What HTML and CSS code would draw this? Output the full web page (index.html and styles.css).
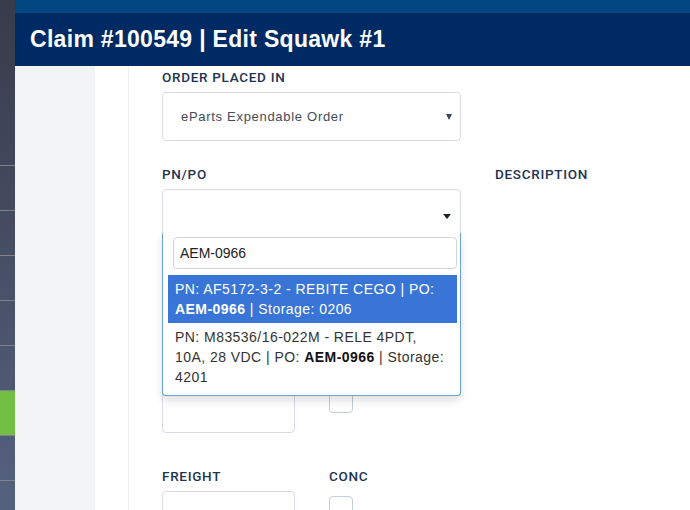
FILE: index.html
```html
<!DOCTYPE html>
<html>
<head>
<meta charset="utf-8">
<link rel="stylesheet" href="styles.css">
</head>
<body>
<div class="app">
  <nav class="sidebar">
    <div class="side-top"></div>
    <div class="side-item"></div>
    <div class="side-item"></div>
    <div class="side-item"></div>
    <div class="side-item"></div>
    <div class="side-item"></div>
    <div class="side-item active"></div>
    <div class="side-item"></div>
    <div class="side-item"></div>
  </nav>
  <div class="main">
    <div class="topbar"></div>
    <header class="header"><h1>Claim #100549 | Edit Squawk #1</h1></header>
    <div class="body">
      <div class="gutter"></div>
      <div class="panel">
        <div class="inner">
          <div class="field">
            <label class="label">Order Placed In</label>
            <div class="select">
              <span class="select-text">eParts Expendable Order</span>
              <span class="caret-sm"></span>
            </div>
          </div>

          <div class="row row-pn">
            <div class="field wide">
              <label class="label">PN/PO</label>
              <div class="select">
                <span class="caret"></span>
                <div class="dropdown">
                  <div class="search">AEM-0966</div>
                  <ul class="results">
                    <li class="option highlighted">PN: AF5172-3-2 - REBITE CEGO | PO: <b>AEM-0966</b> | Storage: 0206</li>
                    <li class="option">PN: M83536/16-022M - RELE 4PDT, 10A, 28 VDC | PO: <b>AEM-0966</b> | Storage: 4201</li>
                  </ul>
                </div>
              </div>
            </div>
            <div class="field">
              <label class="label">Description</label>
            </div>
          </div>

          <div class="row row-hidden">
            <div class="field small">
              <div class="label-space"></div>
              <div class="input"></div>
            </div>
            <div class="field">
              <div class="label-space"></div>
              <div class="checkbox"></div>
            </div>
          </div>

          <div class="row row-freight">
            <div class="field small">
              <label class="label">Freight</label>
              <div class="input"></div>
            </div>
            <div class="field">
              <label class="label">Conc</label>
              <div class="checkbox"></div>
            </div>
          </div>
        </div>
      </div>
    </div>
  </div>
</div>
</body>
</html>
```

FILE: styles.css
```css
* { box-sizing: border-box; }
html, body { margin: 0; padding: 0; }
body {
  width: 690px;
  height: 510px;
  overflow: hidden;
  font-family: "Liberation Sans", Arial, sans-serif;
  background: #fff;
}
.app { display: flex; height: 510px; overflow: hidden; }

.sidebar {
  width: 15px;
  flex: none;
  display: flex;
  flex-direction: column;
  background: linear-gradient(#383b4a, #55627f);
}
.side-top { height: 165px; flex: none; }
.side-item {
  height: 45px;
  flex: none;
  border-top: 1px solid #80838c;
}
.side-item.active { background: #72bf43; }

.main { flex: 1; display: flex; flex-direction: column; min-width: 0; overflow: hidden; }
.topbar { height: 13px; background: #01467f; flex: none; }
.header { height: 53px; background: #002a63; flex: none; padding-left: 15px; }
.header h1 {
  margin: 0;
  color: #fff;
  font-size: 23px;
  font-weight: bold;
  letter-spacing: 0.3px;
  line-height: 53px;
  white-space: nowrap;
}

.body { flex: 1; display: flex; min-height: 0; }
.gutter { width: 80px; background: #f2f3f5; flex: none; }
.panel { flex: 1; padding-left: 33px; }
.inner {
  height: 100%;
  border-left: 1px solid #eff0f3;
  padding: 3px 0 0 33px;
}

.field { display: flex; flex-direction: column; }
.label {
  display: block;
  font-family: Roboto, "Liberation Sans", sans-serif;
  font-size: 13.5px;
  font-weight: 500;
  letter-spacing: 0.7px;
  line-height: 16px;
  color: #1e3451;
  text-transform: uppercase;
  margin-bottom: 7px;
}
.label-space { height: 16px; margin-bottom: 7px; }

.select {
  position: relative;
  width: 299px;
  height: 49px;
  border: 1px solid #d6dbe5;
  border-radius: 4px;
  display: flex;
  align-items: center;
}
.select-text {
  padding-left: 18px;
  font-size: 13px;
  letter-spacing: 0.7px;
  color: #444b5a;
}
.caret-sm {
  position: absolute;
  right: 8px;
  top: 21px;
  border-left: 3px solid transparent;
  border-right: 3px solid transparent;
  border-top: 6px solid #3b475a;
}
.caret {
  position: absolute;
  right: 9px;
  top: 24px;
  border-left: 4px solid transparent;
  border-right: 4px solid transparent;
  border-top: 5px solid #1c2230;
}

.dropdown {
  position: absolute;
  left: -1px;
  top: 43px;
  width: 299px;
  background: #fff;
  border: 1px solid #6a9fe0;
  border-top: none;
  border-radius: 0 0 4px 4px;
  padding: 4px 3px 4px 5px;
  box-shadow: 0 5px 8px rgba(0,0,0,0.12);
  z-index: 5;
}
.search {
  margin-left: 5px;
  height: 32px;
  border: 1px solid #cfd4dd;
  border-radius: 4px;
  padding: 0 6px;
  font-size: 14px;
  line-height: 30px;
  color: #222;
}
.results { list-style: none; margin: 6px 0 0; padding: 0; }
.option {
  padding: 4px 7px;
  font-size: 14px;
  letter-spacing: 0.45px;
  line-height: 20px;
  color: #333;
}
.option b { color: #111; }
.option.highlighted { background: #3875d7; color: #fff; }
.option.highlighted b { color: #fff; }

.row { display: flex; gap: 34px; }
.row-pn { margin-top: 25px; }
.row-hidden { margin-top: 124px; }
.row-freight { margin-top: 35px; }
.field.wide { width: 299px; }
.field.small { width: 133px; }
.input {
  width: 133px;
  height: 48px;
  border: 1px solid #d6dbe5;
  border-radius: 4px;
}
.checkbox {
  margin-top: 5px;
  width: 24px;
  height: 23px;
  border: 1px solid #c5ccd8;
  border-radius: 4px;
}
```
